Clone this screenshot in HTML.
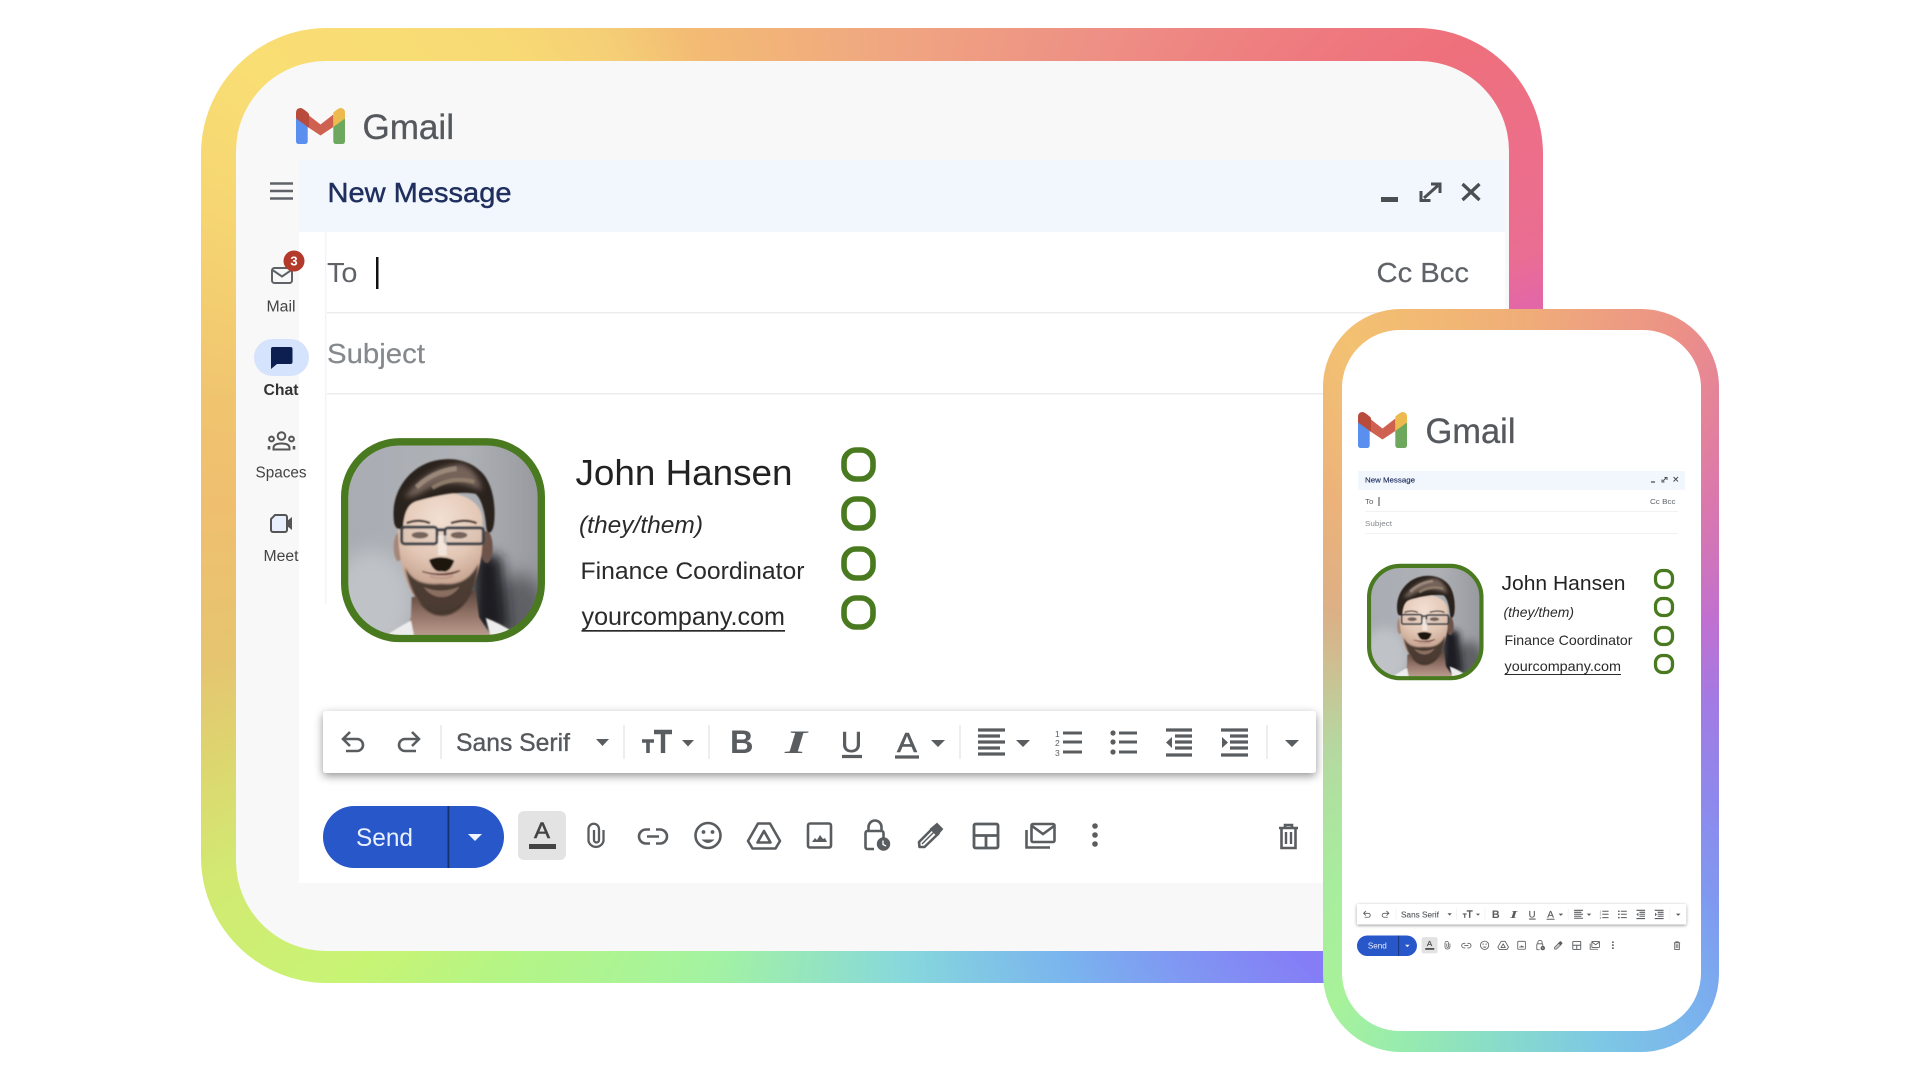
<!DOCTYPE html>
<html lang="en"><head><meta charset="utf-8"><title>Gmail signature</title>
<style>
html,body{margin:0;padding:0;background:#fff;width:1920px;height:1080px;overflow:hidden}
.abs{position:absolute}
svg.abs{left:0;top:0;width:1920px;height:1080px;filter:blur(.35px)}
text{font-family:"Liberation Sans",sans-serif}
#f1{left:201px;top:28px;width:1342px;height:955px;border-radius:126px;
background:conic-gradient(from 0deg at 671px 477px,#f0a880 0deg,#ee9085 26deg,#ee707c 52deg,#ea6d93 69deg,#e367a6 73deg,#c86cd0 95deg,#a274e6 115deg,#857cf6 136deg,#7ab4ee 157deg,#87d8dc 176deg,#a4f3a0 200deg,#b5f585 219deg,#c8f474 228deg,#d2ea72 240deg,#ddd56f 249deg,#e6c470 257deg,#efbf6f 270deg,#f0c46f 279deg,#f6d672 295deg,#f9de74 305deg,#f8da74 321deg,#f5cf76 330deg,#f3bb74 339deg,#f0a880 360deg)}
#f1i{left:236px;top:61px;width:1273px;height:890px;border-radius:90px;background:#f8f8f8}
#f2{left:1323px;top:309px;width:396px;height:743px;border-radius:78px;
background:conic-gradient(from 0deg at 198px 371px,#f0ad78 0deg,#eea47e 9deg,#ec9186 24deg,#e58498 34deg,#db78ac 46deg,#c070d0 72deg,#a37ae3 96deg,#8f88ec 122deg,#8098f0 139deg,#7ab0ee 151deg,#7dc8e4 168deg,#85d8d0 180deg,#98ecac 199deg,#a8f29a 210deg,#a8ec9e 223deg,#b5d8a0 250deg,#d2ba8e 279deg,#dcb086 290deg,#ecb27a 314deg,#f3c172 333deg,#f1b674 349deg,#f0ad78 360deg)}
#f2i{left:1342px;top:330px;width:359px;height:701px;border-radius:58px;background:#fff}
</style></head>
<body>
<div class="abs" id="f1"></div>
<div class="abs" id="f1i"></div>

<svg class="abs" viewBox="0 0 1920 1080" xmlns="http://www.w3.org/2000/svg">
<defs>
<filter id="sh" x="-5%" y="-40%" width="110%" height="200%"><feDropShadow dx="0" dy="3" stdDeviation="4.5" flood-color="#000" flood-opacity=".42"/></filter>
<filter id="b4" x="-20%" y="-20%" width="140%" height="140%"><feGaussianBlur stdDeviation="2.5"/></filter>
<filter id="b9" x="-30%" y="-30%" width="160%" height="160%"><feGaussianBlur stdDeviation="8"/></filter>
<filter id="b18" x="-60%" y="-60%" width="220%" height="220%"><feGaussianBlur stdDeviation="18"/></filter>
<filter id="b28" x="-60%" y="-60%" width="220%" height="220%"><feGaussianBlur stdDeviation="28"/></filter>
<linearGradient id="pbg" x1="0" y1="0" x2="1" y2="0"><stop offset="0" stop-color="#a9adb3"/><stop offset=".6" stop-color="#aeb1b6"/><stop offset="1" stop-color="#96989d"/></linearGradient>
<radialGradient id="fg" gradientUnits="userSpaceOnUse" cx="285" cy="235" r="270"><stop offset="0" stop-color="#f2e0d3"/><stop offset=".45" stop-color="#e3c7b5"/><stop offset="1" stop-color="#ad8571"/></radialGradient>
<linearGradient id="ng" x1="0" y1="0" x2="0" y2="1"><stop offset="0" stop-color="#5a463c"/><stop offset=".55" stop-color="#96766a"/><stop offset="1" stop-color="#bd9f90"/></linearGradient>
<clipPath id="pc"><rect x="10" y="14" width="570" height="570" rx="150"/></clipPath>

<g id="photo">
 <g clip-path="url(#pc)">
  <rect x="0" y="0" width="600" height="600" fill="url(#pbg)"/>
  <ellipse cx="80" cy="480" rx="120" ry="150" fill="#bfc3c7" filter="url(#b28)"/>
  <ellipse cx="520" cy="520" rx="90" ry="120" fill="#5e6065" filter="url(#b28)"/>
  <path d="M385 330L470 350L490 570L380 580Z" fill="#1e1f23" filter="url(#b18)"/>
  <g filter="url(#b4)">
   <path d="M200 470L392 450L402 530L442 590H172L198 530Z" fill="url(#ng)"/>
   <path d="M115 590Q160 560 198 540L210 600Z" fill="#ececec"/>
   <path d="M422 532Q470 550 515 582L440 600Z" fill="#ececec"/>
   <ellipse cx="160" cy="320" rx="14" ry="42" fill="#a5877a"/>
   <ellipse cx="425" cy="320" rx="18" ry="48" fill="#6d5348"/>
   <path d="M160 230C160 140 412 120 412 240C417 340 402 410 372 462C340 522 240 527 213 472C176 425 155 340 160 230Z" fill="url(#fg)"/>
   <path d="M180 380C200 420 232 436 290 430C348 436 378 412 400 370C394 455 352 526 290 526C235 526 198 462 180 380Z" fill="#3f322b" opacity=".9" filter="url(#b4)"/>
   <path d="M236 440Q290 462 344 438Q322 470 290 470Q258 470 236 440Z" fill="#9a7b6b" opacity=".8"/>
   <path d="M148 250C138 190 158 130 208 90C260 48 350 42 402 88C442 120 454 190 447 250C442 280 428 285 424 262C420 214 410 176 392 160C340 150 265 168 215 182C190 190 178 212 174 262C164 270 154 266 148 250Z" fill="#2c231e"/>
   <path d="M180 170Q245 78 350 70Q400 90 410 150Q320 105 240 150Q210 170 180 170Z" fill="#75645a" filter="url(#b9)"/>
   <path d="M215 140Q265 92 335 84" stroke="#a08d7e" stroke-width="14" fill="none" opacity=".9"/>
   <path d="M262 142Q320 106 388 124" stroke="#95826f" stroke-width="12" fill="none" opacity=".85"/>
   <path d="M185 248Q220 234 255 248" stroke="#43342d" stroke-width="7" fill="none"/>
   <path d="M318 248Q360 234 395 248" stroke="#43342d" stroke-width="7" fill="none"/>
   <ellipse cx="225" cy="284" rx="25" ry="10" fill="#5f4f48"/><ellipse cx="342" cy="284" rx="25" ry="10" fill="#5f4f48"/>
   <rect x="170" y="260" width="106" height="50" rx="9" fill="#c9b6aa" fill-opacity=".2" stroke="#3e4349" stroke-width="9"/>
   <rect x="300" y="262" width="115" height="48" rx="9" fill="#c9b6aa" fill-opacity=".2" stroke="#3e4349" stroke-width="9"/>
   <path d="M276 268H300" stroke="#3e4349" stroke-width="9.500"/>
   <path d="M292 285V345" stroke="#f8eee6" stroke-width="26" opacity=".7"/>
   <path d="M252 358Q290 342 328 360Q314 400 290 392Q266 398 252 358Z" fill="#1d1310"/>
   <path d="M232 393Q285 410 345 390Q300 414 232 393Z" fill="#6c3f3e" stroke="#6c3f3e" stroke-width="4"/>
   <path d="M255 407Q290 420 325 406" stroke="#c09a8a" stroke-width="7" fill="none"/>
  </g>
 </g>
 <rect x="-1" y="4" width="590" height="590" rx="165" fill="none" stroke="#4a7a20" stroke-width="22"/>
</g>

<g id="rings" fill="none" stroke="#4a7a20">
 <rect x="-14.5" y="-14.5" width="29" height="29" rx="12" stroke-width="5.6"/>
</g>

<g id="gm">
 <rect x="0" y="9" width="11.7" height="27" rx="2.6" fill="#5a8ff0"/>
 <rect x="37.3" y="9" width="11.7" height="27" rx="2.6" fill="#6ea85f"/>
 <path d="M11.7 6.5L24.5 16.5L37.3 6.5V19L24.5 27.5L11.7 19Z" fill="#cf6150"/>
 <path d="M0 5Q0 0 4.500 0Q6.500 0 11.700 4.500L13 6V19.800L0 10.500Z" fill="#b84b3c"/>
 <path d="M49 5Q49 0 44.500 0Q42.500 0 37.300 4.500V19L49 10.500Z" fill="#ecba4f"/>
</g>

<g id="tbi" fill="none" stroke="#5a5d60" stroke-width="2.6">
 <path d="M350 732L343 739L350 746M343 739H357A6 6 0 0 1 357 751H346"/>
 <path d="M412 732L419 739L412 746M419 739H405A6 6 0 0 0 405 751H416"/>
 <path d="M441 725V759M624 725V759M709 725V759M960 725V759M1267 725V759" stroke="#e8e8e8" stroke-width="1.500"/>
 <g fill="#5a5d60" stroke="none">
  <path d="M596 739H609L602.500 746ZM682 740H694L688 746.500ZM931 740H945L938 747ZM1016 740H1030L1023 747ZM1285 740H1299L1292 747Z"/>
 </g>
 <path d="M654 732H672M663 732V753" stroke-width="4.400"/>
 <path d="M642 741H654M648 741V753" stroke-width="3.600"/>
 <path d="M842 756.500H862M895 757H919" stroke-width="3.200"/>
 <path d="M978 730H1005M978 736H1000M978 742H1005M978 748H1000M978 754H1005" stroke-width="3.200"/>
 <path d="M1063 733H1082M1063 742H1082M1063 752H1082" stroke-width="3"/>
 <path d="M1119 733H1137M1119 742H1137M1119 752H1137" stroke-width="3"/>
 <g fill="#5a5d60" stroke="none"><circle cx="1113" cy="733" r="2.600"/><circle cx="1113" cy="742" r="2.600"/><circle cx="1113" cy="752" r="2.600"/></g>
 <path d="M1166 730H1192M1175 736H1192M1175 742H1192M1175 748H1192M1166 755H1192" stroke-width="3.200"/>
 <path d="M1221 730H1248M1230 736H1248M1230 742H1248M1230 748H1248M1221 755H1248" stroke-width="3.200"/>
 <g fill="#5a5d60" stroke="none"><path d="M1172 737V748L1166 742.500ZM1222 737V748L1228 742.500Z"/></g>

 <path d="M603.500 830V841A7.700 7.700 0 0 1 588.500 841V829A5.200 5.200 0 0 1 599 829V840A2.400 2.400 0 0 1 594 840V830" stroke-width="2.300"/>
 <path d="M650 829.500H646A6.700 6.700 0 0 0 646 843.500H650M656 829.500H660A6.700 6.700 0 0 1 660 843.500H656M647 836.500H659" stroke-width="2.600"/>
 <circle cx="708" cy="835.500" r="12.500"/>
 <circle cx="703.500" cy="832" r="1.900" fill="#5a5d60" stroke="none"/><circle cx="712.500" cy="832" r="1.900" fill="#5a5d60" stroke="none"/>
 <path d="M701.500 839.500Q708 846.500 714.500 839.500Z" fill="#5a5d60" stroke="none"/>
 <path d="M758 823.500H770L780 841L775.500 848.500H752.500L748 841Z" stroke-linejoin="round"/>
 <path d="M764 831L770.500 842.500H757.500Z" stroke-linejoin="round"/>
 <rect x="808" y="823.500" width="23" height="24" rx="2"/>
 <path d="M812 842L815 838L817 840L820 835L823 839L825 838L827 842Z" fill="#5a5d60" stroke="none"/>
 <path d="M868.500 831V827A6.500 6.500 0 0 1 881.500 827V831"/>
 <path d="M874 849H867.500A2 2 0 0 1 865.500 847V833A2 2 0 0 1 867.500 831H881.500A2 2 0 0 1 883.500 833V838"/>
 <circle cx="883.500" cy="844" r="6.700" fill="#5a5d60" stroke="none"/>
 <path d="M883 840.500V844.500L886 846" stroke="#fff" stroke-width="1.300"/>
 <path d="M919.500 847L919 842L933 828L938.500 833.500L924.500 847Z" stroke-linejoin="round"/>
 <path d="M931 829L937 824L942 829L937 835Z" fill="#5a5d60" stroke-width="2"/>
 <path d="M922 844L934 832" stroke-width="1.500"/>
 <rect x="974" y="824" width="24" height="24" rx="1.500" stroke-width="2.800"/>
 <path d="M974 835.500H998M986 835.500V848" stroke-width="2.800"/>
 <rect x="1031.500" y="824" width="23" height="18" rx="1.500"/>
 <path d="M1032 826L1043 834L1054 826M1026.500 830V847.500H1050"/>
 <g fill="#5a5d60" stroke="none"><circle cx="1095" cy="826" r="2.800"/><circle cx="1095" cy="835" r="2.800"/><circle cx="1095" cy="844" r="2.800"/></g>
 <path d="M1279 828H1298M1285 828V825H1292V828"/>
 <path d="M1281.500 828V848H1295.500V828"/>
 <path d="M1286 832V844M1291 832V844" stroke-width="2.400"/>
</g>

<g id="hdri" fill="none" stroke="#4c4f52">
 <rect x="1381" y="197" width="17" height="5" fill="#4c4f52" stroke="none"/>
 <path d="M1431 184H1440V193M1421 191V200.500H1430.500M1424 198L1438 185.500" stroke-width="3"/>
 <path d="M1462.500 184L1479.500 200M1479.500 184L1462.500 200" stroke-width="3.300"/>
</g>
</defs>

<!-- Compose panel -->
<rect x="299" y="160" width="1206" height="723" fill="#fff"/>
<rect x="299" y="160" width="1206" height="72" fill="#f2f6fd"/>
<rect x="325" y="232" width="1.500" height="372" fill="#f1f4fb"/>
<rect x="327" y="312" width="1100" height="1.500" fill="#ececee"/>
<rect x="327" y="393" width="1100" height="1.500" fill="#ececee"/>

<use href="#gm" x="296" y="108"/>
<text x="362.500" y="139" font-size="35" fill="#55585c" textLength="91.500" lengthAdjust="spacingAndGlyphs" stroke="#55585c" stroke-width=".3">Gmail</text>

<!-- sidebar -->
<path d="M270 183.500H293M270 191H293M270 198.500H293" stroke="#5f6368" stroke-width="2.400"/>
<rect x="272" y="268" width="20" height="15" rx="2.500" fill="none" stroke="#5f6368" stroke-width="2"/>
<path d="M272.500 270L282 276.500L291.500 270" fill="none" stroke="#5f6368" stroke-width="2"/>
<circle cx="294" cy="261" r="10.500" fill="#b3392b"/>
<text x="294" y="265.500" font-size="13" font-weight="700" fill="#fff" text-anchor="middle">3</text>
<text x="281" y="311.500" font-size="15.500" fill="#444" text-anchor="middle" textLength="29" lengthAdjust="spacingAndGlyphs">Mail</text>
<rect x="254" y="339" width="55" height="37" rx="18.500" fill="#d6e3fc"/>
<path d="M273 347H290.500A2 2 0 0 1 292.500 349V362A2 2 0 0 1 290.500 364H277L271 369V349A2 2 0 0 1 273 347Z" fill="#0d1f50"/>
<text x="281" y="395" font-size="15.500" font-weight="700" fill="#333" text-anchor="middle" textLength="35" lengthAdjust="spacingAndGlyphs">Chat</text>
<g fill="none" stroke="#555" stroke-width="2">
 <circle cx="281.500" cy="436" r="3.800"/><circle cx="271.500" cy="439" r="2.400"/><circle cx="291.500" cy="439" r="2.400"/>
 <path d="M273.500 449.500V448Q273.500 443.500 281.500 443.500Q289.500 443.500 289.500 448V449.500Z"/>
 <path d="M269 449.500V446M294 449.500V446" stroke-width="2.600"/>
</g>
<text x="281" y="477.500" font-size="15.500" fill="#444" text-anchor="middle" textLength="51" lengthAdjust="spacingAndGlyphs">Spaces</text>
<path d="M275 515H285A2 2 0 0 1 287 517V530A2 2 0 0 1 285 532H273A2 2 0 0 1 271 530V519Z" fill="#e8f0fe" stroke="#555" stroke-width="2"/>
<path d="M287 521L292 517V530L287 526Z" fill="#555"/>
<text x="281" y="561" font-size="15.500" fill="#444" text-anchor="middle" textLength="35" lengthAdjust="spacingAndGlyphs">Meet</text>

<!-- header text -->
<text x="327.500" y="202" font-size="28" fill="#1f2f5e" stroke="#1f2f5e" stroke-width=".45" textLength="184" lengthAdjust="spacingAndGlyphs">New Message</text>
<use href="#hdri"/>
<text x="327" y="282" font-size="28" fill="#5f6368" textLength="30.500" lengthAdjust="spacingAndGlyphs">To</text>
<rect x="376" y="257" width="2.500" height="32" fill="#111"/>
<text x="1376.500" y="282" font-size="28" fill="#5f6368" stroke="#5f6368" stroke-width=".2" textLength="92.500" lengthAdjust="spacingAndGlyphs">Cc Bcc</text>
<text x="327" y="363" font-size="28" fill="#85888c" stroke="#85888c" stroke-width=".2" textLength="98" lengthAdjust="spacingAndGlyphs">Subject</text>

<!-- signature -->
<use href="#photo" transform="translate(345 440.500) scale(.3333)"/>
<text x="575.500" y="485" font-size="36" fill="#222" textLength="217" lengthAdjust="spacingAndGlyphs">John Hansen</text>
<text x="579" y="533" font-size="24" font-style="italic" fill="#2a2a2a" textLength="124" lengthAdjust="spacingAndGlyphs">(they/them)</text>
<text x="580.500" y="579" font-size="24.500" fill="#2a2a2a" textLength="224" lengthAdjust="spacingAndGlyphs">Finance Coordinator</text>
<text x="581.500" y="625" font-size="25" fill="#2a2a2a" textLength="203.500" lengthAdjust="spacingAndGlyphs">yourcompany.com</text>
<rect x="581.500" y="630" width="203.500" height="1.700" fill="#2a2a2a"/>
<use href="#rings" x="858.500" y="464.500"/><use href="#rings" x="858.500" y="513.500"/><use href="#rings" x="858.500" y="563.500"/><use href="#rings" x="858.500" y="612.500"/>

<!-- toolbar -->
<rect x="323" y="711" width="993" height="62" rx="3" fill="#fff" filter="url(#sh)"/>
<use href="#tbi"/>
<text x="456" y="751" font-size="25" fill="#55585c" stroke="#55585c" stroke-width=".35" textLength="114" lengthAdjust="spacingAndGlyphs">Sans Serif</text>
<text x="730" y="753" font-size="32.500" font-weight="700" fill="#5a5d60">B</text>
<text x="785" y="753" font-size="32.500" font-style="italic" font-weight="700" fill="#5a5d60" style="font-family:'Liberation Serif',serif" textLength="22" lengthAdjust="spacingAndGlyphs">I</text>
<text x="841" y="752" font-size="29" fill="#5a5d60" stroke="#5a5d60" stroke-width=".5" textLength="21" lengthAdjust="spacingAndGlyphs">U</text>
<text x="897" y="752" font-size="28" fill="#5a5d60" stroke="#5a5d60" stroke-width=".6" textLength="20" lengthAdjust="spacingAndGlyphs">A</text>
<text x="1055" y="737" font-size="8.500" fill="#5a5d60">1</text><text x="1055" y="746" font-size="8.500" fill="#5a5d60">2</text><text x="1055" y="756" font-size="8.500" fill="#5a5d60">3</text>

<!-- send row -->
<rect x="323" y="806" width="181" height="62" rx="31" fill="#2757c9"/>
<rect x="447.500" y="806" width="1.800" height="62" fill="#15306e"/>
<text x="356" y="846" font-size="25" fill="#eaf0ff" textLength="57" lengthAdjust="spacingAndGlyphs">Send</text>
<path d="M468 834H482L475 841Z" fill="#f0f4ff"/>
<rect x="518" y="811" width="48" height="49" rx="6" fill="#e3e3e3"/>
<text x="534" y="838" font-size="22" fill="#444" stroke="#444" stroke-width=".5" textLength="16" lengthAdjust="spacingAndGlyphs">A</text>
<rect x="529" y="844" width="27" height="5" fill="#444"/>
</svg>

<div class="abs" id="f2"></div>
<div class="abs" id="f2i"></div>

<svg class="abs" viewBox="0 0 1920 1080" xmlns="http://www.w3.org/2000/svg">
<use href="#gm" x="1358" y="412"/>
<text x="1425.500" y="443" font-size="35" fill="#55585c" textLength="90" lengthAdjust="spacingAndGlyphs" stroke="#55585c" stroke-width=".3">Gmail</text>

<rect x="1358" y="471" width="327" height="19" fill="#f2f6fd"/>
<text x="1365" y="482.500" font-size="7.700" fill="#1f2f5e" stroke="#1f2f5e" stroke-width=".15" textLength="50" lengthAdjust="spacingAndGlyphs">New Message</text>
<g fill="none" stroke="#4c4f52" stroke-width="1">
 <path d="M1651 482H1655" stroke-width="1.300"/>
 <path d="M1664.500 477.500H1667V480M1662 479.500V482H1664.500M1663 481L1666 478"/>
 <path d="M1673.500 477L1678 481.500M1678 477L1673.500 481.500"/>
</g>
<text x="1365" y="504" font-size="7.700" fill="#5f6368" textLength="8.500" lengthAdjust="spacingAndGlyphs">To</text>
<rect x="1378.500" y="497" width="1" height="9" fill="#444"/>
<text x="1650" y="504" font-size="7.700" fill="#5f6368" textLength="25.500" lengthAdjust="spacingAndGlyphs">Cc Bcc</text>
<rect x="1365" y="511" width="313" height=".8" fill="#eeeeef"/>
<text x="1365" y="526" font-size="7.700" fill="#85888c" textLength="27" lengthAdjust="spacingAndGlyphs">Subject</text>
<rect x="1365" y="533" width="313" height=".8" fill="#eeeeef"/>

<use href="#photo" transform="translate(1369.300 565.100) scale(.1904)"/>
<text x="1501.500" y="590" font-size="20.500" fill="#222" textLength="124" lengthAdjust="spacingAndGlyphs">John Hansen</text>
<text x="1503.500" y="617" font-size="13.800" font-style="italic" fill="#2a2a2a" textLength="70.500" lengthAdjust="spacingAndGlyphs">(they/them)</text>
<text x="1504.500" y="645" font-size="14" fill="#2a2a2a" textLength="128" lengthAdjust="spacingAndGlyphs">Finance Coordinator</text>
<text x="1504.500" y="671" font-size="14.200" fill="#2a2a2a" textLength="116.500" lengthAdjust="spacingAndGlyphs">yourcompany.com</text>
<rect x="1504.500" y="674" width="116.500" height="1" fill="#2a2a2a"/>
<use href="#rings" transform="translate(1664 579) scale(.585)"/>
<use href="#rings" transform="translate(1664 607) scale(.585)"/>
<use href="#rings" transform="translate(1664 636) scale(.585)"/>
<use href="#rings" transform="translate(1664 664) scale(.585)"/>

<g transform="translate(1249.900 668.300) scale(.3315)">
 <rect x="323" y="711" width="993" height="62" rx="3" fill="#fff" filter="url(#sh)"/>
 <use href="#tbi"/>
 <text x="456" y="751" font-size="25" fill="#55585c" stroke="#55585c" stroke-width=".35" textLength="114" lengthAdjust="spacingAndGlyphs">Sans Serif</text>
 <text x="730" y="753" font-size="32.500" font-weight="700" fill="#5a5d60">B</text>
 <text x="785" y="753" font-size="32.500" font-style="italic" font-weight="700" fill="#5a5d60" style="font-family:'Liberation Serif',serif" textLength="22" lengthAdjust="spacingAndGlyphs">I</text>
 <text x="841" y="752" font-size="29" fill="#5a5d60" stroke="#5a5d60" stroke-width=".5" textLength="21" lengthAdjust="spacingAndGlyphs">U</text>
 <text x="897" y="752" font-size="28" fill="#5a5d60" stroke="#5a5d60" stroke-width=".6" textLength="20" lengthAdjust="spacingAndGlyphs">A</text>
 <text x="1055" y="737" font-size="8.500" fill="#5a5d60">1</text><text x="1055" y="746" font-size="8.500" fill="#5a5d60">2</text><text x="1055" y="756" font-size="8.500" fill="#5a5d60">3</text>
 <rect x="323" y="806" width="181" height="62" rx="31" fill="#2757c9"/>
 <rect x="447.500" y="806" width="2.500" height="62" fill="#15306e"/>
 <text x="356" y="846" font-size="25" fill="#eaf0ff" textLength="57" lengthAdjust="spacingAndGlyphs">Send</text>
 <path d="M468 834H482L475 841Z" fill="#f0f4ff"/>
 <rect x="518" y="811" width="48" height="49" rx="6" fill="#e3e3e3"/>
 <text x="534" y="838" font-size="22" fill="#444" stroke="#444" stroke-width=".5" textLength="16" lengthAdjust="spacingAndGlyphs">A</text>
 <rect x="529" y="844" width="27" height="5" fill="#444"/>
</g>
</svg>
</body></html>
